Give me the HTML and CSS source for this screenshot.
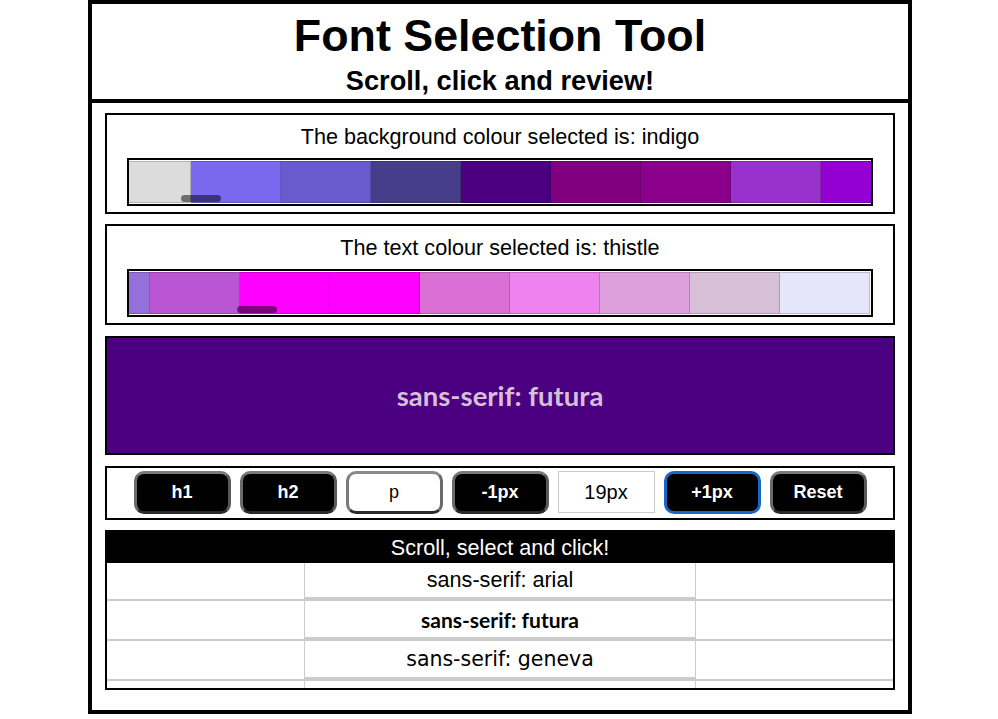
FILE: index.html
```html
<!DOCTYPE html>
<html lang="en">
<head>
<meta charset="utf-8">
<title>Font Selection Tool</title>
<link rel="stylesheet" href="styles.css">
</head>
<body>
<div class="page">
  <header class="header">
    <h1 class="title">Font Selection Tool</h1>
    <h2 class="subtitle">Scroll, click and review!</h2>
  </header>
  <main class="content">
    <section class="picker">
      <p class="picker-label">The background colour selected is: indigo</p>
      <div class="strip">
        <div class="track track-bg">
          <span class="swatch" style="background:gainsboro"></span>
          <span class="swatch" style="background:mediumslateblue"></span>
          <span class="swatch" style="background:slateblue"></span>
          <span class="swatch" style="background:darkslateblue"></span>
          <span class="swatch" style="background:indigo"></span>
          <span class="swatch" style="background:purple"></span>
          <span class="swatch" style="background:darkmagenta"></span>
          <span class="swatch" style="background:darkorchid"></span>
          <span class="swatch" style="background:darkviolet"></span>
        </div>
        <span class="thumb thumb-bg"></span>
      </div>
    </section>
    <section class="picker">
      <p class="picker-label">The text colour selected is: thistle</p>
      <div class="strip">
        <div class="track track-text">
          <span class="swatch" style="background:mediumpurple"></span>
          <span class="swatch" style="background:mediumorchid"></span>
          <span class="swatch" style="background:magenta"></span>
          <span class="swatch" style="background:fuchsia"></span>
          <span class="swatch" style="background:orchid"></span>
          <span class="swatch" style="background:violet"></span>
          <span class="swatch" style="background:plum"></span>
          <span class="swatch" style="background:thistle"></span>
          <span class="swatch" style="background:lavender"></span>
        </div>
        <span class="thumb thumb-text"></span>
      </div>
    </section>
    <section class="preview">
      <p class="preview-text">sans-serif: futura</p>
    </section>
    <section class="controls">
      <button class="btn">h1</button>
      <button class="btn">h2</button>
      <button class="btn btn-light">p</button>
      <button class="btn">-1px</button>
      <div class="size-field">19px</div>
      <button class="btn btn-focus">+1px</button>
      <button class="btn">Reset</button>
    </section>
    <section class="list">
      <div class="list-head">Scroll, select and click!</div>
      <div class="list-view">
        <div class="list-rows">
          <div class="row"><span class="cell"></span><span class="cell-font font-arial">sans-serif: arial</span><span class="cell"></span></div>
          <div class="row"><span class="cell"></span><span class="cell-font font-futura">sans-serif: futura</span><span class="cell"></span></div>
          <div class="row"><span class="cell"></span><span class="cell-font font-geneva">sans-serif: geneva</span><span class="cell"></span></div>
          <div class="row"><span class="cell"></span><span class="cell-font"></span><span class="cell"></span></div>
        </div>
      </div>
    </section>
  </main>
</div>
</body>
</html>
```
FILE: styles.css
```css
* { box-sizing: border-box; }

body {
  margin: 0;
  background: #fff;
  color: #000;
  font-family: "Liberation Sans", Arial, sans-serif;
}

.page {
  width: 824px;
  margin: 0 86px 0 88px;
  border: 4px solid #000;
  padding-bottom: 20px;
}

.header {
  text-align: center;
  border-bottom: 4px solid #000;
  padding: 5px 0 3px;
}

.title {
  margin: 0;
  font-size: 44.8px;
  line-height: 52px;
  font-weight: bold;
}

.subtitle {
  margin: 4px 0 0;
  font-size: 27.2px;
  line-height: 31px;
  font-weight: bold;
}

.content {
  padding: 0 13px;
}

.picker {
  margin-top: 10px;
  border: 2px solid #000;
  padding: 9px 20px 6px;
}

.picker-label {
  margin: 0 0 9px;
  font-size: 21.6px;
  line-height: 25px;
  text-align: center;
}

.strip {
  position: relative;
  border: 2px solid #000;
  padding: 1px;
  background: #fff;
  overflow: hidden;
}

.track {
  display: flex;
}

.track-bg { margin-left: -29px; }
.track-text { margin-left: -70px; }

.swatch {
  flex: none;
  width: 90px;
  height: 42px;
  border: 1px solid rgba(0, 0, 0, 0.18);
  border-left: none;
}

.thumb {
  position: absolute;
  bottom: 2px;
  width: 40px;
  height: 7px;
  border-radius: 4px;
  background: rgba(0, 0, 0, 0.5);
}

.thumb-bg { left: 52px; }
.thumb-text { left: 108px; }

.preview {
  margin-top: 11px;
  height: 119px;
  border: 2px solid #000;
  background: indigo;
  display: flex;
  align-items: center;
  justify-content: center;
}

.preview-text {
  margin: 0;
  color: thistle;
  font-family: Lato, "Open Sans", sans-serif;
  font-weight: bold;
  font-size: 27.5px;
}

.controls {
  margin-top: 11px;
  border: 2px solid #000;
  padding: 3px 0 4px;
  display: flex;
  justify-content: center;
  gap: 9px;
}

.btn {
  width: 97px;
  height: 43px;
  padding: 0;
  border: 3px solid;
  border-color: #7a7a7a #5a5a5a #2a2a2a #6a6a6a;
  border-radius: 10px;
  background: #000;
  color: #fff;
  font-family: "Liberation Sans", Arial, sans-serif;
  font-weight: bold;
  font-size: 18px;
}

.btn-light {
  background: #fff;
  color: #000;
  font-weight: normal;
  border-color: #8a8a8a #6a6a6a #2a2a2a #7a7a7a;
}

.btn-focus {
  border-color: #1a66c4;
}

.size-field {
  width: 97px;
  height: 42px;
  border: 1px solid #ccc;
  display: flex;
  align-items: center;
  justify-content: center;
  font-size: 20px;
}

.list {
  margin-top: 10px;
  border: 2px solid #000;
}

.list-head {
  background: #000;
  color: #fff;
  text-align: center;
  font-size: 21.6px;
  height: 31px;
  line-height: 31px;
}

.list-view {
  height: 125px;
  overflow: hidden;
}

.list-rows {
  margin-top: -4px;
}

.row {
  display: grid;
  grid-template-columns: 197px 1fr 197px;
  height: 40px;
  border-top: 2px solid #ccc;
}

.cell-font {
  border-left: 1px solid #ccc;
  border-right: 1px solid #ccc;
  border-bottom: 2px solid #ccc;
  display: flex;
  align-items: center;
  justify-content: center;
  font-size: 21.6px;
  line-height: 25px;
  padding-top: 1px;
}

.font-futura {
  font-family: Lato, "Open Sans", sans-serif;
  font-weight: bold;
  font-size: 21px;
}

.font-geneva {
  font-family: "DejaVu Sans", Verdana, sans-serif;
  font-size: 20.5px;
}
```
